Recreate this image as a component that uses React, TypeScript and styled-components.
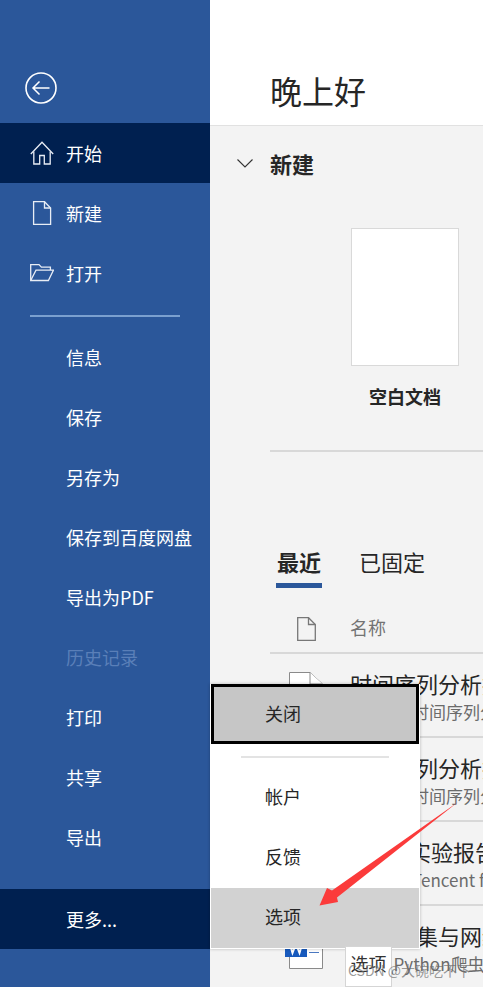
import React from 'react';
import styled, {createGlobalStyle} from 'styled-components';

const GlobalStyle = createGlobalStyle`
    html, body {
        margin: 0;
        padding: 0;
        background: #fff;
    }
    body {
        font-family: "Noto Sans CJK SC", "Noto Sans", sans-serif;
        overflow: hidden;
    }
`;

const navTop = [
    {label: '开始', icon: 'home', active: true},
    {label: '新建', icon: 'doc'},
    {label: '打开', icon: 'folder'},
];

const navBottom = [
    {label: '信息'},
    {label: '保存'},
    {label: '另存为'},
    {label: '保存到百度网盘'},
    {label: '导出为PDF'},
    {label: '历史记录', disabled: true},
    {label: '打印'},
    {label: '共享'},
    {label: '导出'},
];

const recentFiles = [
    {title: '时间序列分析报告', path: 'E:\\桌面\\时间序列分析报告'},
    {title: '时间序列分析报告', path: 'E:\\桌面\\时间序列分析报告'},
    {title: 'HTML实验报告', path: 'E:\\桌面\\Tencent files'},
    {title: '数据采集与网络爬虫', path: 'E:\\re\\Python爬虫实验'},
];

const NavIcon = ({name}: {name?: string}) => {
    if (name === 'home') {
        return <svg width="24" height="24" viewBox="0 0 24 24" fill="none" stroke="#e8edf5" strokeWidth="1.3">
            <path d="M0.8 13 12 1.2 23.2 13" />
            <path d="M3.8 10.5V23H9.7V14.5H14.3V23H20.2V10.5" />
        </svg>;
    }
    if (name === 'doc') {
        return <svg width="24" height="24" viewBox="0 0 24 24" fill="none" stroke="#e8edf5" strokeWidth="1.3">
            <path d="M3.6 0.7H14.5L20.6 7V23.3H3.6Z" />
            <path d="M14.5 0.7V7H20.6" />
        </svg>;
    }
    return <svg width="24" height="24" viewBox="0 0 24 24" fill="none" stroke="#e8edf5" strokeWidth="1.3">
        <path d="M0.7 19.5V3.6H9L11.4 6.2H20.4V9" />
        <path d="M0.7 19.5 6 9.2H23.4L18.4 19.5Z" />
    </svg>;
};

const FileIcon = () => <svg width="38" height="45" viewBox="0 0 38 45" fill="none">
    <path d="M4.5 0.5H25L37.5 12V44.5H4.5Z" fill="#fff" stroke="#8a8a8a" />
    <path d="M25 0.5V12H37.5" fill="#fff" stroke="#8a8a8a" />
    <rect x="0" y="13" width="22" height="20" fill="#185abd" />
    <path d="M4 17 7.5 29 11 20 14.5 29 18 17" stroke="#fff" strokeWidth="2" />
    <path d="M24 28.5H34" stroke="#4a78c0" />
</svg>;

const App = () => {
    return <Root>
        <GlobalStyle />

        <Sidebar>
            <BackBar>
                <svg width="32" height="32" viewBox="0 0 32 32" fill="none" stroke="#fff">
                    <circle cx="16" cy="16" r="15" strokeWidth="1.6" />
                    <path d="M24.5 16H8M14.5 9.5 8 16 14.5 22.5" strokeWidth="1.5" />
                </svg>
            </BackBar>

            {navTop.map(item => <NavItem key={item.label} $active={item.active}>
                <IconSlot><NavIcon name={item.icon} /></IconSlot>
                {item.label}
            </NavItem>)}

            <NavDivider />

            {navBottom.map(item => <NavItem key={item.label} $disabled={item.disabled}>
                <IconSlot />
                {item.label}
            </NavItem>)}

            <MoreItem $active>
                <IconSlot />
                更多...
            </MoreItem>
        </Sidebar>

        <Main>
            <Greeting>晚上好</Greeting>

            <Content>
                <SectionHead>
                    <svg width="16" height="9" viewBox="0 0 16 9" fill="none" stroke="#333" strokeWidth="1.1">
                        <path d="M0.5 0.5 8 8 15.5 0.5" />
                    </svg>
                    <SectionTitle>新建</SectionTitle>
                </SectionHead>

                <Templates>
                    <BlankDoc />
                    <TemplateName>空白文档</TemplateName>
                </Templates>

                <Tabs>
                    <Tab $active>最近</Tab>
                    <Tab>已固定</Tab>
                </Tabs>

                <ListHead>
                    <svg width="19" height="24" viewBox="0 0 19 24" fill="none" stroke="#777" strokeWidth="1.3">
                        <path d="M0.7 0.7H11.5L18.3 7.5V23.3H0.7Z" />
                        <path d="M11.5 0.7V7.5H18.3" />
                    </svg>
                    <ListHeadLabel>名称</ListHeadLabel>
                </ListHead>

                {recentFiles.map((file, index) => <FileRow key={index}>
                    <FileIconSlot><FileIcon /></FileIconSlot>
                    <FileText>
                        <FileTitle>{file.title}</FileTitle>
                        <FilePath>{file.path}</FilePath>
                    </FileText>
                </FileRow>)}
            </Content>
        </Main>

        <PopMenu>
            <CloseItem>关闭</CloseItem>
            <PopDivider />
            <PopItem>帐户</PopItem>
            <PopItem>反馈</PopItem>
            <PopItem $hover>选项</PopItem>
        </PopMenu>

        <Tooltip>选项</Tooltip>
        <Watermark>CSDN @大碗吃不下</Watermark>

        <ArrowMark viewBox="0 0 483 987">
            <path d="M458 802 332 890.5 327 888 319.5 905.5 338 902 337 897.5Z" fill="#fb3b3b" />
        </ArrowMark>
    </Root>;
};

export default App;


const Root = styled.div`
    position: relative;
    display: flex;
    width: 483px;
    height: 987px;
    overflow: hidden;
`;

const Sidebar = styled.nav`
    flex: 0 0 210px;
    display: flex;
    flex-direction: column;
    background: #2b579a;
`;

const BackBar = styled.div`
    height: 123px;
    box-sizing: border-box;
    padding: 72px 0 0 25px;
`;

const NavItem = styled.div<{$active?: boolean, $disabled?: boolean}>`
    flex: 0 0 60px;
    box-sizing: border-box;
    padding-bottom: 1px;
    display: flex;
    align-items: center;
    font-size: 18px;
    color: ${props => props.$disabled ? '#5a7fb8' : '#fff'};
    background: ${props => props.$active ? '#002050' : 'transparent'};
`;

const MoreItem = styled(NavItem)`
    margin-top: 22px;
`;

const IconSlot = styled.span`
    flex: 0 0 66px;
    display: flex;
    padding-left: 30px;
    box-sizing: border-box;
`;

const NavDivider = styled.div`
    flex: 0 0 2px;
    margin: 12px 30px 10px;
    background: #7ba0cf;
`;

const Main = styled.main`
    flex: 1;
    min-width: 0;
    display: flex;
    flex-direction: column;
`;

const Greeting = styled.h1`
    flex: 0 0 126px;
    margin: 0;
    box-sizing: border-box;
    padding: 65px 0 0 60px;
    font-size: 32px;
    line-height: 50px;
    font-weight: 400;
    color: #262626;
    background: #fff;
    border-bottom: 1px solid #e1e1e1;
`;

const Content = styled.div`
    flex: 1;
    min-height: 0;
    background: #f3f3f3;
`;

const SectionHead = styled.div`
    height: 74px;
    display: flex;
    align-items: center;
    gap: 17px;
    padding-left: 27px;
    box-sizing: border-box;
`;

const SectionTitle = styled.h2`
    margin: 0;
    font-size: 22px;
    font-weight: 700;
    color: #262626;
`;

const Templates = styled.div`
    margin: 28px 0 0 60px;
    height: 224px;
    width: 270px;
    box-sizing: border-box;
    border-bottom: 2px solid #d8d8d8;
    display: flex;
    flex-direction: column;
    align-items: center;
`;

const BlankDoc = styled.div`
    width: 108px;
    height: 138px;
    flex: none;
    box-sizing: border-box;
    background: #fff;
    border: 1px solid #d9d9d9;
`;

const TemplateName = styled.div`
    margin-top: 17px;
    font-size: 18px;
    line-height: 26px;
    font-weight: 700;
    color: #262626;
    text-align: center;
`;

const Tabs = styled.div`
    display: flex;
    gap: 36px;
    margin: 93px 0 0 66px;
    height: 43px;
`;

const Tab = styled.div<{$active?: boolean}>`
    font-size: 22px;
    line-height: 32px;
    height: 43px;
    padding: 0 1px;
    box-sizing: border-box;
    font-weight: ${props => props.$active ? 700 : 400};
    color: #262626;
    border-bottom: 5px solid ${props => props.$active ? '#2b579a' : 'transparent'};
`;

const ListHead = styled.div`
    margin: 21px 0 0 60px;
    height: 45px;
    box-sizing: border-box;
    display: flex;
    align-items: flex-start;
    gap: 34px;
    padding: 8px 0 0 27px;
    border-bottom: 2px solid #d8d8d8;
`;

const ListHeadLabel = styled.span`
    font-size: 18px;
    line-height: 20px;
    color: #737373;
`;

const FileRow = styled.div`
    margin-left: 60px;
    height: 84px;
    box-sizing: border-box;
    display: flex;
    overflow: hidden;
    white-space: nowrap;
    border-bottom: 2px solid #d8d8d8;
`;

const FileIconSlot = styled.div`
    flex: 0 0 80px;
    padding: 18px 0 0 15px;
    box-sizing: border-box;
`;

const FileText = styled.div`
    display: flex;
    flex-direction: column;
    padding-top: 12px;
`;

const FileTitle = styled.div`
    font-size: 22px;
    line-height: 34px;
    color: #262626;
`;

const FilePath = styled.div`
    font-size: 17px;
    line-height: 24px;
    color: #6b6b6b;
`;

const PopMenu = styled.div`
    position: absolute;
    left: 210px;
    top: 684px;
    width: 210px;
    height: 265px;
    background: #fff;
    box-shadow: 0 0 3px rgba(0, 0, 0, 0.25);
`;

const CloseItem = styled.div`
    height: 60px;
    box-sizing: border-box;
    display: flex;
    align-items: center;
    padding: 0 0 3px 51px;
    margin: 0 1px;
    font-size: 18px;
    color: #262626;
    background: #c6c6c6;
    border: 3px solid #000;
`;

const PopDivider = styled.div`
    height: 2px;
    margin: 12px 31px 10px;
    background: #e3e3e3;
`;

const PopItem = styled.div<{$hover?: boolean}>`
    height: 60px;
    box-sizing: border-box;
    display: flex;
    align-items: center;
    padding: 0 0 4px 54px;
    margin: 0 1px;
    font-size: 18px;
    color: #262626;
    background: ${props => props.$hover ? '#d2d2d2' : 'transparent'};
`;

const Tooltip = styled.div`
    position: absolute;
    left: 345px;
    top: 946px;
    width: 47px;
    height: 41px;
    box-sizing: border-box;
    padding-top: 2px;
    text-align: center;
    font-size: 18px;
    line-height: 28px;
    color: #333;
    background: #fff;
    border: 1px solid #d5d5d5;
`;

const Watermark = styled.div`
    position: absolute;
    left: 348px;
    top: 960px;
    font-size: 14px;
    line-height: 20px;
    white-space: nowrap;
    color: rgba(110, 110, 110, 0.7);
`;

const ArrowMark = styled.svg`
    position: absolute;
    left: 0;
    top: 0;
    width: 483px;
    height: 987px;
    pointer-events: none;
`;
